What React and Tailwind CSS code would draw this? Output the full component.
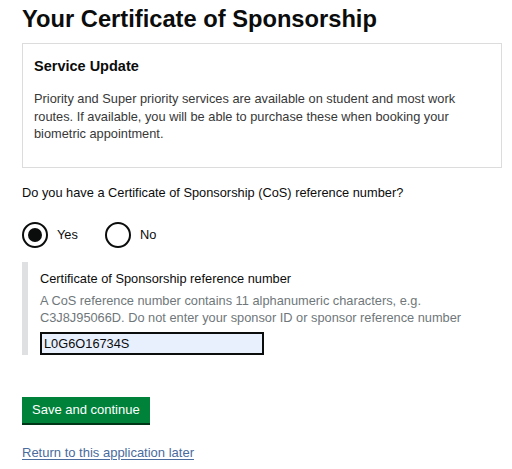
import React from "react";

const font = { fontFamily: '"Liberation Sans", Arial, sans-serif' };

const Radio = ({ label, checked, className }) => (
  <label className={`flex items-center gap-[9px] ${className || ""}`}>
    <span className="w-[26px] h-[26px] rounded-full border-2 border-[#0b0c0c] flex items-center justify-center">
      {checked && <span className="w-[14px] h-[14px] rounded-full bg-[#0b0c0c]" />}
    </span>
    <span className="text-[12.8px] text-[#0b0c0c]">{label}</span>
  </label>
);

export default function App() {
  return (
    <div
      className="w-[512px] h-[469px] bg-white pl-[22px] pr-[10px] text-[#0b0c0c] overflow-hidden"
      style={font}
    >
      <h1 className="text-[23.7px] leading-[30px] font-bold pt-[4px]">
        Your Certificate of Sponsorship
      </h1>

      {/* Service update panel */}
      <div className="mt-[9px] w-[480px] border border-[#dcdcdc] pl-[11px] pr-[12px] pt-[12px] pb-[24px]">
        <h2 className="text-[14.5px] leading-[20px] font-bold">Service Update</h2>
        <p className="mt-[14px] text-[12.8px] leading-[17.5px] text-[#383838]">
          Priority and Super priority services are available on student and most work
          routes. If available, you will be able to purchase these when booking your
          biometric appointment.
        </p>
      </div>

      <p className="mt-[16px] text-[12.8px] leading-[18px]">
        Do you have a Certificate of Sponsorship (CoS) reference number?
      </p>

      <div className="flex mt-[20px]">
        <Radio label="Yes" checked className="mr-[27px]" />
        <Radio label="No" />
      </div>

      {/* Conditional reveal */}
      <div className="mt-[14px] border-l-[6px] border-[#dee0e2] pl-[12px] pt-[8px]">
        <p className="text-[12.8px] leading-[18px]">
          Certificate of Sponsorship reference number
        </p>
        <p className="mt-[4px] text-[12.8px] leading-[17px] text-[#6f777b]">
          A CoS reference number contains 11 alphanumeric characters, e.g.
          <br />
          C3J8J95066D. Do not enter your sponsor ID or sponsor reference number
        </p>
        <input
          type="text"
          defaultValue="L0G6O16734S"
          className="mt-[6px] block w-[224px] h-[23px] border-2 border-[#0b0c0c] bg-[#e8f0fe] px-[2px] text-[12.8px] text-[#0b0c0c] outline-none"
          style={font}
        />
      </div>

      <button
        type="button"
        className="mt-[42px] block bg-[#00823b] text-white text-[13px] leading-[18px] px-[10px] pt-[4px] pb-[4px] shadow-[0_2px_0_#003618]"
      >
        Save and continue
      </button>

      <a
        href="#"
        className="mt-[21px] block w-fit text-[13px] leading-[18px] text-[#4a6b9d] underline underline-offset-2"
      >
        Return to this application later
      </a>
    </div>
  );
}
